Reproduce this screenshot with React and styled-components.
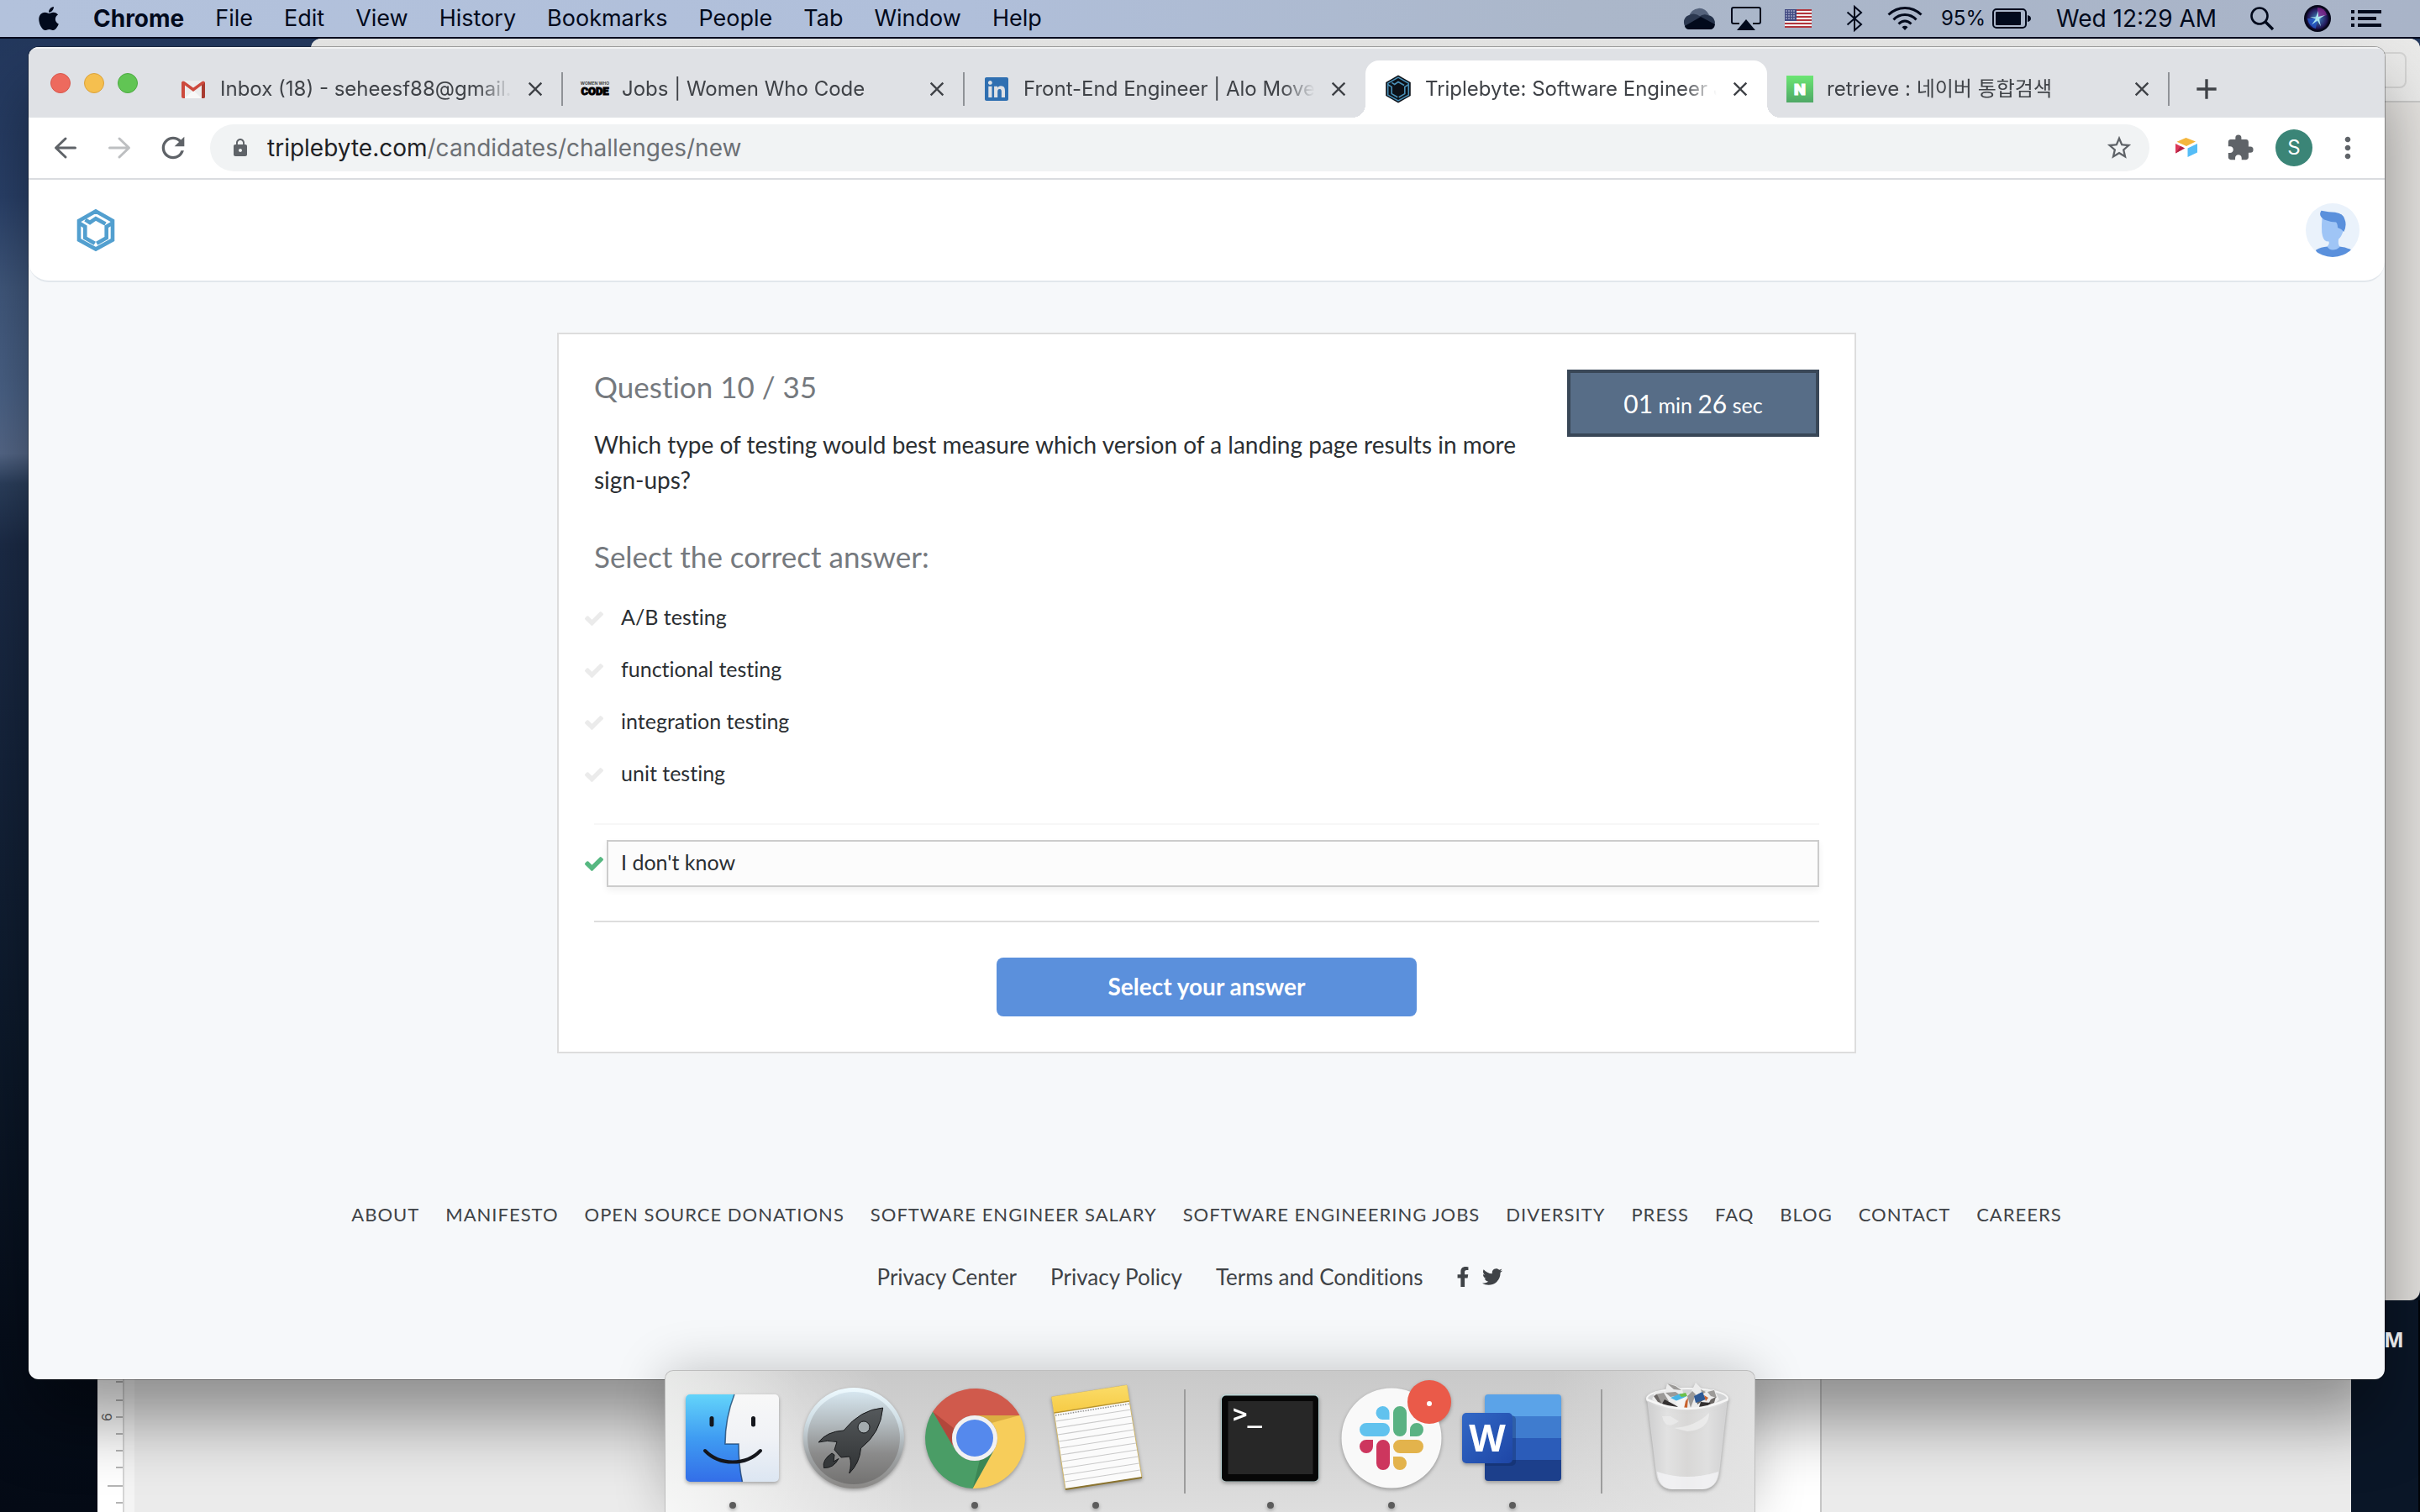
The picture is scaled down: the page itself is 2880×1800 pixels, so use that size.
import React, { useState } from "react";
import styled, { createGlobalStyle, css } from "styled-components";
import { FaApple, FaFacebookF, FaTwitter, FaLinkedin } from "react-icons/fa";
import { MdAdd, MdClose, MdExtension, MdLock, MdMoreVert, MdRefresh, MdStarBorder } from "react-icons/md";

const UI = `Inter, "Noto Sans CJK KR", sans-serif`;
const BODY = `Lato, "Open Sans", sans-serif`;

const GlobalStyle = createGlobalStyle`
  *, *::before, *::after { box-sizing: border-box; }
  html, body { margin: 0; height: 100%; overflow: hidden; }
  #root { height: 100%; }
  button, input { font: inherit; }
  svg { display: block; flex: none; overflow: visible; }
`;

/* ---------- desktop ---------- */

const Desktop = styled.div`
  position: relative;
  height: 100%;
  min-height: 900px;
  overflow: hidden;
  font-family: ${UI};
  background: linear-gradient(
    180deg,
    #22365a 0%, #263c63 8%, #2a416a 13%, #41597e 19%, #4b6388 26%,
    #56698a 30%, #2c405e 32%, #1c2c48 36%, #15243c 50%, #0d1a2c 68%, #060e1b 88%, #040a15 100%
  );
`;

const MenuBar = styled.header`
  position: relative;
  z-index: 5;
  display: flex;
  justify-content: space-between;
  height: 46px;
  padding: 0 46px 0 42px;
  border-bottom: 2px solid #020b1e;
  background: linear-gradient(90deg, #b3c2dc 0%, #b0bfda 40%, #abb7ca 65%, #a9b4c8 100%);
  color: #020a1c;
  font-size: 27px;
  line-height: 44px;
`;

const Menus = styled.nav`
  display: flex;
  align-items: center;
  gap: 37px;
`;

const MenuItem = styled.button`
  padding: 0;
  border: 0;
  background: none;
  color: inherit;
  font-size: ${(p) => (p.$strong ? 28 : 27)}px;
  font-weight: ${(p) => (p.$strong ? 700 : 400)};
`;

const Status = styled.div`
  display: flex;
  align-items: center;
`;

const StatusItem = styled.span`
  display: flex;
  align-items: center;
  gap: 8px;
  margin-left: ${(p) => p.$gap}px;
  font-size: ${(p) => (p.$small ? 24 : 28)}px;
`;

const BackWindow = styled.section`
  position: absolute;
  top: 46px;
  left: 370px;
  right: 0;
  bottom: 252px;
  border-radius: 12px;
  background: #e4e2df;
  overflow: hidden;
`;

const BackToolbar = styled.div`
  display: flex;
  justify-content: flex-end;
  height: 76px;
  padding: 16px 16px 15px 0;
  border-bottom: 2px solid #c9c9c8;
  background: linear-gradient(#e9e9e8, #ececeb);
`;

const BackField = styled.div`
  width: 300px;
  border: 2px solid #d4d4d3;
  border-radius: 8px;
`;

const DesktopLabel = styled.span`
  position: absolute;
  right: 20px;
  bottom: 188px;
  color: #e0e1e3;
  font-size: 24px;
  font-weight: 700;
  line-height: 32px;
`;

const DocWindow = styled.section`
  position: absolute;
  top: 1400px;
  left: 116px;
  right: 82px;
  bottom: 0;
  display: flex;
  background: #ebebeb;
`;

const DocRuler = styled.div`
  display: flex;
  width: 32px;
  border-right: 2px solid #d5d5d5;
  background: #fff;
`;

const DocGutter = styled.div`
  width: 12px;
  background: #f4f4f4;
`;

const DocSheet = styled.div`
  flex: 1;
  margin-left: 760px;
  margin-right: 630px;
  border-right: 2px solid #c6c6c6;
  background: #fff;
`;

const DeskEdge = styled.div`
  position: absolute;
  top: 1548px;
  right: 0;
  bottom: 0;
  width: 82px;
  border-right: 2px solid #010408;
  background: #0a1627;
`;

/* ---------- browser ---------- */

const Browser = styled.main`
  position: absolute;
  top: 56px;
  left: 34px;
  right: 42px;
  bottom: 158px;
  display: flex;
  flex-direction: column;
  border-radius: 12px;
  overflow: hidden;
  background: #f6f8fa;
`;

const BrowserShadow = styled.div`
  position: absolute;
  top: 56px;
  left: 34px;
  right: 42px;
  bottom: 158px;
  border-radius: 12px;
  box-shadow: 0 0 0 1px rgba(0, 0, 0, 0.3), 0 50px 80px rgba(0, 0, 0, 0.4);
`;

const TabStrip = styled.div`
  display: flex;
  align-items: flex-end;
  height: 84px;
  border-top: 2px solid #f1f2f3;
  background: #dfe1e5;
`;

const Lights = styled.div`
  display: flex;
  gap: 16px;
  width: 157px;
  padding: 0 0 29px 26px;
`;

const Light = styled.button`
  width: 24px;
  height: 24px;
  padding: 0;
  border: 1px solid ${(p) => p.$edge};
  border-radius: 50%;
  background: ${(p) => p.$fill};
`;

const Tab = styled.div`
  position: relative;
  display: flex;
  align-items: center;
  width: 478px;
  height: 68px;
  padding: 0 18px 0 23px;
  color: #3f4247;
  font-size: 24px;
  ${(p) =>
    p.$active &&
    css`
      border-radius: 16px 16px 0 0;
      background: #fff;
      &::before,
      &::after {
        content: "";
        position: absolute;
        bottom: 0;
        width: 16px;
        height: 16px;
      }
      &::before {
        left: -16px;
        background: radial-gradient(circle at 0 0, transparent 16px, #fff 16px);
      }
      &::after {
        right: -16px;
        background: radial-gradient(circle at 100% 0, transparent 16px, #fff 16px);
      }
    `}
  ${(p) =>
    p.$divided &&
    css`
      &::after {
        content: "";
        position: absolute;
        right: -1px;
        top: 14px;
        width: 2px;
        height: 40px;
        background: #8f9297;
      }
    `}
`;

const Favicon = styled.span`
  display: flex;
  flex: none;
  align-items: center;
  justify-content: center;
  width: 32px;
  height: 32px;
  margin-right: 16px;
`;

const TabTitle = styled.span`
  flex: 1;
  overflow: hidden;
  white-space: nowrap;
  line-height: 36px;
  mask-image: linear-gradient(90deg, #000 0, #000 calc(100% - 40px), transparent 100%);
`;

const IconButton = styled.button`
  display: flex;
  align-items: center;
  justify-content: center;
  flex: none;
  width: ${(p) => p.$size}px;
  height: ${(p) => p.$size}px;
  padding: 0;
  border: 0;
  background: none;
  color: ${(p) => p.$color || "#5f6368"};
`;

const CloseButton = styled(IconButton)`
  margin-left: 14px;
`;

const NewTab = styled(IconButton)`
  margin: 0 0 2px 13px;
`;

const Toolbar = styled.div`
  display: flex;
  align-items: center;
  height: 74px;
  padding: 0 12px;
  border-bottom: 2px solid #dadce0;
  background: #fff;
`;

const AddressBar = styled.div`
  display: flex;
  flex: 1;
  align-items: center;
  height: 56px;
  margin: 0 12px;
  padding: 0 19px 0 24px;
  border-radius: 28px;
  background: #f1f3f4;
  color: #5f6368;
`;

const Address = styled.span`
  flex: 1;
  padding-left: 20px;
  font-size: 28px;
  line-height: 40px;
  color: #6c7075;
  b {
    color: #202124;
    font-weight: 400;
  }
`;

const Profile = styled.span`
  width: 44px;
  height: 44px;
  border-radius: 50%;
  background: #3b8577;
  color: #fff;
  font-size: 24px;
  line-height: 44px;
  text-align: center;
`;

/* ---------- page ---------- */

const SiteHeader = styled.header`
  display: flex;
  align-items: center;
  justify-content: space-between;
  height: 122px;
  padding: 0 30px 0 58px;
  border-bottom: 2px solid #e2e7ec;
  border-radius: 0 0 24px 24px;
  background: #fff;
`;

const Page = styled.div`
  flex: 1;
  font-family: ${BODY};
  font-variant-ligatures: none;
  color: #2b2f33;
`;

const Card = styled.form`
  max-width: 1546px;
  margin: 60px auto 0;
  padding: 42px;
  border: 2px solid #dddddd;
  background: #fff;
`;

const QuestionRow = styled.div`
  display: flex;
  align-items: flex-start;
  gap: 20px;
`;

const QuestionText = styled.div`
  flex: 1;
`;

const Heading = styled.h2`
  margin: 0;
  color: #75797e;
  font-size: 35px;
  font-weight: 400;
  line-height: 40px;
`;

const Prompt = styled.p`
  margin: 28px 0 50px;
  font-size: 28px;
  line-height: 42px;
`;

const Timer = styled.div`
  width: 300px;
  height: 80px;
  border: 4px solid #394757;
  background: #576d87;
  color: #fff;
  font-size: 25px;
  line-height: 72px;
  text-align: center;
  b {
    font-size: 30px;
    font-weight: 400;
  }
`;

const Options = styled.fieldset`
  display: flex;
  flex-direction: column;
  gap: 6px;
  margin: 26px 0 0;
  padding: 0;
  border: 0;
`;

const OptionRow = styled.label`
  display: flex;
  align-items: center;
  margin-left: -11px;
  color: ${(p) => (p.$checked ? "#56b881" : "#ebebeb")};
`;

const Radio = styled.input`
  position: absolute;
  opacity: 0;
`;

const OptionBox = styled.span`
  flex: 1;
  height: 56px;
  margin-left: 4px;
  padding-left: 15px;
  border: 2px solid transparent;
  color: #2b2f33;
  font-size: 25px;
  line-height: 49px;
  ${(p) =>
    p.$checked &&
    css`
      border-color: #cccccc;
      background: #fcfcfc;
      box-shadow: 0 4px 8px rgba(0, 0, 0, 0.06);
    `}
`;

const FaintRule = styled.hr`
  width: 100%;
  margin: 24px 0 12px;
  border: 0;
  border-top: 2px solid #f7f7f7;
`;

const Rule = styled.hr`
  margin: 40px 0 42px;
  border: 0;
  border-top: 2px solid #dddddd;
`;

const Submit = styled.button`
  display: block;
  width: 500px;
  height: 70px;
  margin: 0 auto;
  padding: 0 0 2px;
  border: 0;
  border-radius: 8px;
  background: #5b90dc;
  color: #fff;
  font-size: 28px;
  font-weight: 700;
`;

const Footer = styled.footer`
  display: flex;
  flex-direction: column;
  align-items: center;
  gap: 42px;
  margin-top: 176px;
  line-height: 32px;
`;

const FooterNav = styled.nav`
  display: flex;
  justify-content: center;
  gap: 31px;
  font-size: 22px;
  letter-spacing: 1px;
  text-transform: uppercase;
  white-space: nowrap;
`;

const LegalNav = styled.nav`
  display: flex;
  align-items: center;
  gap: 40px;
  padding-right: 40px;
  font-size: 26px;
`;

const Social = styled.span`
  display: flex;
  gap: 11px;
  margin-left: -4px;
`;

const FooterLink = styled.a`
  color: #3f4347;
  text-decoration: none;
`;

/* ---------- dock ---------- */

const Dock = styled.div`
  position: absolute;
  left: 50%;
  bottom: 0;
  display: flex;
  height: 169px;
  padding: 20px 8px 0;
  transform: translateX(-50%);
  border: 1px solid #bdbdbd;
  border-bottom: 0;
  border-radius: 10px 10px 0 0;
  background:
    radial-gradient(circle at 0% 100%, rgba(255, 255, 255, 0.7), transparent 300px),
    linear-gradient(90deg, rgba(225, 227, 225, 0.8), transparent 160px calc(100% - 240px), rgba(230, 230, 230, 0.8)),
    linear-gradient(#c9c9c9, #dedede);
  box-shadow: 0 0 60px rgba(0, 0, 0, 0.22);
`;

const DockItem = styled.button`
  display: flex;
  flex-direction: column;
  align-items: center;
  width: 144px;
  padding: 0;
  border: 0;
  background: none;
  filter: drop-shadow(0 2px 2px rgba(0, 0, 0, 0.3));
`;

const Running = styled.span`
  width: 8px;
  height: 8px;
  margin-top: 16px;
  border-radius: 50%;
  background: #5c5c5c;
`;

const DockDivider = styled.span`
  width: 2px;
  height: 124px;
  margin: 2px 29px 0 33px;
  background: #9d9d9d;
`;

/* ---------- small drawings ---------- */

const CheckMark = () => (
  <svg width="22" height="18" viewBox="121 270 1550 1252" fill="currentColor">
    <path d="M1671 566q0 40-28 68l-724 724-136 136q-28 28-68 28t-68-28l-136-136-362-362q-28-28-28-68t28-68l136-136q28-28 68-28t68 28l294 295 656-657q28-28 68-28t68 28l136 136q28 28 28 68z" />
  </svg>
);

const HexStrokes = ({ color, width }) => (
  <g fill="none" stroke={color} strokeWidth={width}>
    <path d="M22 2.4 42 13.8V36.6L22 47.6 2 36.6V13.8Z" />
    <path d="M2 16.5 9.3 20.8V34.2L20.8 40.8" />
    <path d="M42 16.5 34.7 20.8V34.2L23.2 40.8" />
    <path d="M9.5 12.6 15 16 22 11.2 33.5 17.6" />
  </g>
);

const SiteLogo = () => (
  <svg width="44" height="50" viewBox="0 0 44 50">
    <HexStrokes color="#529fcf" width={4.6} />
  </svg>
);

const TriplebyteFavicon = () => (
  <svg width="30" height="32" viewBox="-1 -1 46 52">
    <path d="M22 -2 46 12V38L22 52 -2 38V12Z" fill="#0c1118" />
    <HexStrokes color="#4a90b8" width={2.6} />
  </svg>
);

const GmailFavicon = () => (
  <svg width="28" height="21" viewBox="0 0 28 21">
    <path d="M2 0h24a2 2 0 0 1 2 2v17a2 2 0 0 1-2 2H2a2 2 0 0 1-2-2V2a2 2 0 0 1 2-2z" fill="#eceded" />
    <path d="M4 21 14 11.5 24 21z" fill="#f8f8f8" />
    <path d="M0 2v17a2 2 0 0 0 2 2h2V5.5L14 13 24 5.5V21h2a2 2 0 0 0 2-2V2q-1.2-2.6-3.6-1L14 8.6 3.6 1Q1.2-.6 0 2z" fill="#cd4a3d" />
    <path d="M24 5.500V21h2a2 2 0 0 0 2-2V2.500z" fill="#a83b31" />
  </svg>
);

const CodeFavicon = () => (
  <svg width="32" height="18" viewBox="0 0 32 18">
    <text x="16" y="4" textAnchor="middle" fontSize="5" fontWeight="700" fontFamily="Inter" fill="#444">WOMEN WHO</text>
    <text x="16" y="16" textAnchor="middle" fontSize="13" fontWeight="900" fontFamily="Roboto" fill="#000" stroke="#000" strokeWidth="1">CODE</text>
  </svg>
);

const NaverFavicon = () => (
  <svg width="32" height="32" viewBox="0 0 32 32">
    <defs>
      <linearGradient id="nv" x2="0" y2="1">
        <stop offset="0" stopColor="#6be673" />
        <stop offset="1" stopColor="#4fa866" />
      </linearGradient>
    </defs>
    <rect width="32" height="32" fill="url(#nv)" />
    <text x="16" y="22.500" textAnchor="middle" fontFamily="Inter" fontSize="18" fontWeight="900" fill="#fff" stroke="#fff">N</text>
  </svg>
);

const ArrowIcon = ({ flip, color }) => (
  <svg width="26" height="26" viewBox="0 0 26 26" fill="none" stroke={color} strokeWidth="3" strokeLinecap="round" strokeLinejoin="round">
    <path d={flip ? "M1.500 13H24M13 2l11.500 11L13 24" : "M24.500 13H2M13 2 1.500 13 13 24"} />
  </svg>
);

const ExtensionCube = () => (
  <svg width="28" height="24" viewBox="0 0 28 24">
    <path d="M13.500 0 25 4.600 14 10 2.500 4.800z" fill="#f4b63d" />
    <path d="M1 7 12 12.500 1 18.500z" fill="#dc3858" />
    <path d="M1 18.500 12 12.500 7 10z" fill="#b32246" />
    <path d="M15.500 12.500 27 7v10.500L15.500 23z" fill="#55bdf7" />
  </svg>
);

const UserAvatar = () => (
  <svg width="64" height="64" viewBox="0 0 64 64">
    <defs>
      <clipPath id="av"><circle cx="32" cy="32" r="32" /></clipPath>
    </defs>
    <g clipPath="url(#av)">
      <rect width="64" height="64" fill="#eaf2fb" />
      <path d="M12 55.700Q18 52 26 51.500H40Q49 52 54.500 56L50 66H15z" fill="#5a90dc" />
      <path d="M19.600 16Q18.600 26 19.200 34.700 20.500 44 24.500 45.200L27.500 45.600Q28.500 49 25.500 51.500 28 55.500 32 55.500 37 55.500 40.500 52 38 48 39.200 42.500 42.500 40 45 32L40 16z" fill="#9fc5f6" />
      <path d="M18.500 8.700Q28 10.600 35 10.700 44 12 46 18 49.500 26 45.300 34 43 30.500 38 29 38 24 36 22.500 28 22 22 19.500 14.500 15 18.500 8.700z" fill="#5a90dc" />
    </g>
  </svg>
);

const INK = "#020a1c";

const CloudIcon = () => (
  <svg width="40" height="28" viewBox="0 0 40 28">
    <path d="M8 12a12.500 12.500 0 0 1 24-2l-14 8z" fill="#55637c" />
    <path d="M8 10a9 9 0 0 0 0 17L22 12Q15 6 8 10z" fill="#2b3850" />
    <path d="M30 10a9 9 0 0 1 4 17L20 12Q25 8 30 10z" fill="#26334b" />
    <path d="M3 23 22 12l17 9q-1 6-6 6H8q-4 0-5-4z" fill={INK} />
  </svg>
);

const AirplayIcon = () => (
  <svg width="36" height="28" viewBox="0 0 36 28">
    <path d="M10 20H3a2 2 0 0 1-2-2V3a2 2 0 0 1 2-2h30a2 2 0 0 1 2 2v15a2 2 0 0 1-2 2h-7" fill="none" stroke={INK} strokeWidth="2" />
    <path d="M18 15 29 28H7z" fill={INK} />
  </svg>
);

const FlagIcon = () => (
  <svg width="32" height="22" viewBox="0 0 32 22">
    <rect width="32" height="22" fill="#f3f0f0" />
    {[0, 1, 2, 3, 4, 5].map((i) => (
      <rect key={i} y={i * 4} width="32" height="2" fill="#b2353c" />
    ))}
    <rect width="14" height="14" fill="#414a82" />
    {[2, 5, 8, 11].map((y) => [2, 5, 8, 11].map((x) => <circle key={`${x}-${y}`} cx={x} cy={y} r=".8" fill="#dfe2f0" />))}
  </svg>
);

const BluetoothIcon = () => (
  <svg width="20" height="30" viewBox="0 0 20 30" fill="none" stroke={INK} strokeWidth="2">
    <path d="M1.500 7.500 18 22l-8 7V1l8 7L1.500 22.500" />
  </svg>
);

const WifiIcon = () => (
  <svg width="42" height="28" viewBox="0 0 42 28" fill="none" stroke={INK} strokeWidth="3">
    <path d="M1.500 9.500Q10 1.500 21 1.500T40.500 9.500M7.500 15.500Q13 9.500 21 9.500T34.500 15.500M13.500 20.500Q17 17 21 17T28.500 20.500" />
    <path d="M17.500 24.200Q21 21.500 24.500 24.200L21 28z" fill={INK} stroke="none" />
  </svg>
);

const BatteryIcon = () => (
  <svg width="46" height="24" viewBox="0 0 46 24">
    <rect x="1" y="1" width="39" height="22" rx="4" fill="none" stroke={INK} strokeWidth="2" />
    <rect x="4" y="4" width="30" height="16" rx="1" fill={INK} />
    <path d="M42 8q4 1 4 4t-4 4z" fill={INK} />
  </svg>
);

const SearchIcon = () => (
  <svg width="28" height="28" viewBox="0 0 28 28" fill="none" stroke={INK} strokeWidth="2.600">
    <circle cx="11" cy="11" r="9.500" />
    <path d="m18 18 9 9" strokeWidth="3.400" />
  </svg>
);

const SiriIcon = () => (
  <svg width="32" height="32" viewBox="0 0 32 32">
    <defs>
      <radialGradient id="siri">
        <stop offset="0" stopColor="#9fdcf0" />
        <stop offset=".3" stopColor="#35609c" />
        <stop offset=".8" stopColor="#241a5c" />
        <stop offset="1" stopColor="#0a0820" />
      </radialGradient>
    </defs>
    <circle cx="16" cy="16" r="16" fill="#06071a" />
    <circle cx="16" cy="16" r="14" fill="url(#siri)" />
    <path d="M16 3q9 0 11 9L16 16z" fill="#a02a9a" opacity=".6" />
    <path d="M4 16q2 10 10 12l2-12z" fill="#2463d8" opacity=".7" />
    <path d="m17 7 0 7L25 12l-7 4.500 2 9-4-7-7 5 5-7L7 14l7 .500z" fill="#a9e4ee" />
  </svg>
);

const ListIcon = () => (
  <svg width="36" height="20" viewBox="0 0 36 20" fill={INK}>
    {[0, 8, 16].map((y) => (
      <g key={y}>
        <rect y={y} width="4" height="4" />
        <rect x="8" y={y} width={y === 8 ? 22 : 28} height="4" />
      </g>
    ))}
  </svg>
);

const RulerMarks = () => (
  <svg width="30" height="400" viewBox="0 0 30 400">
    {[245, 267, 287, 307, 327, 347, 389].map((y) => (
      <rect key={y} x="22" y={y - 1} width="8" height="2" fill="#b5b5b5" />
    ))}
    <rect x="12" y="368" width="18" height="2" fill="#b5b5b5" />
    <text transform="translate(17 292) rotate(-90)" fontFamily="Inter" fontSize="16" fill="#666">6</text>
  </svg>
);

/* ---------- dock icons, each on a 120 grid ---------- */

const Icon120 = ({ children }) => (
  <svg width="120" height="120" viewBox="0 0 120 120">{children}</svg>
);

const Gradient = ({ id, stops, x2 = 0, y2 = 1 }) => (
  <linearGradient id={id} x1="0" y1="0" x2={x2} y2={y2}>
    {stops.map((c, i) => (
      <stop key={c + i} offset={i / (stops.length - 1)} stopColor={c} />
    ))}
  </linearGradient>
);

const FinderIcon = () => (
  <Icon120>
    <defs>
      <Gradient id="fb" stops={["#63d4fa", "#3f9cf2", "#336ee8"]} />
      <Gradient id="fw" stops={["#f8f8f8", "#f0f2f6", "#dce6f2"]} />
    </defs>
    <rect x="4" y="8" width="111" height="104" rx="5" fill="url(#fw)" />
    <path d="M9 8H62Q51 36 51 67H67Q67 92 71.500 112H9a5 5 0 0 1-5-5V13a5 5 0 0 1 5-5z" fill="url(#fb)" />
    <path d="M62 8Q51 36 51 67H67Q67 92 71.500 112" fill="none" stroke="#10355e" strokeOpacity=".7" strokeWidth="1.500" />
    <path d="M35 36.500V44M84.500 36.500V44" stroke="#14161c" strokeWidth="5" strokeLinecap="round" />
    <path d="M27 75Q40 88.500 60 88.500T93 75" fill="none" stroke="#14161c" strokeWidth="4" strokeLinecap="round" />
  </Icon120>
);

const LaunchpadIcon = () => (
  <Icon120>
    <defs>
      <Gradient id="lr" stops={["#eefaff", "#cfdde4", "#a0a4a6", "#8a8886"]} />
      <Gradient id="lf" stops={["#d6e6ef", "#b4bcc0", "#8b8b8b", "#737271"]} />
      <Gradient id="lk" stops={["#55595c", "#303234"]} />
    </defs>
    <circle cx="60" cy="60" r="60" fill="url(#lr)" />
    <circle cx="60" cy="60" r="55" fill="url(#lf)" />
    <path d="M94.700 24Q68 26 48 51 28 52 18 65 28 62 40 64.500L37 74 45 83 55 82Q58 90 54.700 102 67 90 68.600 72 92 54 94.700 24z" fill="url(#lk)" stroke="#17191b" />
    <circle cx="72" cy="47" r="7" fill="#a3abae" stroke="#17191b" />
    <path d="M34 78Q22 86 24.500 95.500 36 96 42 84.500L36 88 37 80z" fill="#35383a" stroke="#17191b" />
  </Icon120>
);

const ChromeIcon = () => (
  <Icon120>
    <path d="M10 28.600A60 60 0 0 1 113.500 33H60A27 27 0 0 0 36.600 73.500Z" fill="#d05a4c" />
    <path d="M10 28.600 36.600 73.500A27 27 0 0 0 83.400 73.500L57.600 120A60 60 0 0 1 10 28.600Z" fill="#4a9d66" />
    <path d="M113.500 33A60 60 0 0 1 57.600 120L83.400 73.500A27 27 0 0 0 60 33Z" fill="#f7cd5a" />
    <path d="M10 28.600 33 68Q32 54 36 49Z" fill="#8d3028" opacity=".45" />
    <path d="M60 33H113L80 42Z" fill="#b98a25" opacity=".45" />
    <path d="M57.600 120 82 76 66 86Z" fill="#2a6b3f" opacity=".45" />
    <circle cx="60" cy="60" r="27" fill="#f1f1f2" />
    <circle cx="60" cy="60" r="22" fill="#5589ed" />
  </Icon120>
);

const NotesIcon = () => (
  <Icon120>
    <defs>
      <Gradient id="nt" stops={["#fbdc68", "#f6cb45"]} />
    </defs>
    <path d="M7.500 11 97 -3 115 107 24 121z" fill="#fbfbfb" stroke="#cfb66a" />
    <path d="M7.500 11 97 -3 100 15.500 10.500 29.500z" fill="url(#nt)" />
    <path d="M10.500 30 100 16" stroke="#b99328" strokeWidth="1.500" />
    <path d="M12 33 101 19" stroke="#8d8d8d" strokeWidth="1.500" strokeDasharray="1.500 1.500" />
    {[0, 1, 2, 3, 4, 5, 6, 7, 8, 9].map((i) => (
      <path key={i} d={`M${12.5 + i * 1.2} ${40 + i * 8}l89.500-14`} stroke="#c9c9c9" strokeWidth="1.200" />
    ))}
    <path d="M24 121 115 107" stroke="#8a7330" strokeWidth="2" />
  </Icon120>
);

const TerminalIcon = () => (
  <Icon120>
    <rect x="1" y="8" width="117" height="104" rx="6" fill="#b9d4d4" />
    <rect x="2" y="9.500" width="115" height="102" rx="5" fill="#070707" />
    <rect x="9.500" y="16" width="101" height="87" fill="#272727" />
    <text x="15" y="41" fontFamily="DejaVu Sans Mono, monospace" fontWeight="700" fontSize="29" fill="#fff">&gt;_</text>
  </Icon120>
);

const SlackIcon = () => (
  <Icon120>
    <circle cx="60" cy="60" r="59.500" fill="#f9f9f9" />
    <path d="M57.500 38H50a8 8 0 1 1 7.500-8zM30 42h20a8 8 0 0 1 0 16H30a8 8 0 0 1 0-16z" fill="#61c2ee" />
    <path d="M62 30a8 8 0 0 1 16 0V50a8 8 0 0 1-16 0zM82 58V50a8 8 0 1 1 8 8z" fill="#5ab283" />
    <path d="M38 62V70a8 8 0 1 1-8-8zM42 70a8 8 0 0 1 16 0V90a8 8 0 0 1-16 0z" fill="#cd365e" />
    <path d="M70 62H90a8 8 0 0 1 0 16H70a8 8 0 0 1 0-16zM62 82H70a8 8 0 1 1-8 8z" fill="#e3b34c" />
    <circle cx="105" cy="17" r="26" fill="#ea5a49" />
    <circle cx="105" cy="19" r="3" fill="#fff" />
  </Icon120>
);

const WordIcon = () => (
  <Icon120>
    <defs>
      <clipPath id="wc"><rect x="27" y="8" width="91" height="103" rx="4" /></clipPath>
      <Gradient id="wf" x2={1} stops={["#3268c6", "#1e46a6"]} />
    </defs>
    <g clipPath="url(#wc)">
      <rect x="27" y="8" width="91" height="27" fill="#5ba3e8" />
      <rect x="27" y="34" width="91" height="27" fill="#3f7ccf" />
      <rect x="27" y="60" width="91" height="27" fill="#2b5cb9" />
      <rect x="27" y="86" width="91" height="27" fill="#1c3f8b" />
      <rect x="24" y="33" width="40" height="60" rx="5" fill="#0b1f4d" opacity=".3" />
    </g>
    <rect y="30" width="60" height="60" rx="5" fill="url(#wf)" />
    <text x="30" y="76" textAnchor="middle" fontFamily="Open Sans" fontWeight="700" fontSize="45" fill="#fff">W</text>
  </Icon120>
);

const TrashIcon = () => (
  <Icon120>
    <defs>
      <Gradient id="tb" x2={1} y2={0} stops={["#cfcfd0", "#e4e4e4", "#dad9d8", "#e2e2e2", "#d2d2d3"]} />
    </defs>
    <ellipse cx="60" cy="13" rx="48" ry="12" fill="#d2d3d4" stroke="#f4f4f4" strokeWidth="2" />
    <path d="M18 14 22 4 34 4 36 -5 46 -3 54 2 56 10 64 6 70 -6 80 4 92 2 98 14 90 22 74 25H44L26 20z" fill="#ececec" />
    <path d="M22 8 32 6 38 16 28 20zM36 -5 44 2 53 3 46 -2zM34 6 46 5 52 9 40 11zM60 10 66 4 70 8 64 24zM84 5 92 3 95 12 88 10zM76 2 82 5 78 8z" fill="#9c9a98" />
    <path d="M20 10 24 8 29 18 25 17zM70 10 76 6 80 14 72 20zM88 14 94 11 92 18 84 21z" fill="#6a6664" />
    <path d="M33 14 46 21 52 25 36 24 30 19zM76 17 88 18 82 24 74 23z" fill="#343131" />
    <path d="M40 12 52 7 59 10 50 17z" fill="#48b5e6" />
    <path d="M50 8 58 6 60 10 53 11z" fill="#6cc04a" />
    <path d="M46 16 58 11 56 25 50 25z" fill="#f5f5f5" />
    <path d="M68 10 78 5 82 14 70 18z" fill="#2e5a96" />
    <path d="M58 16 61 12 60 24 56 25zM80 9 85 12 82 16z" fill="#c8622e" />
    <path d="M12 14Q60 36 108 14L98 102Q95 120 78 121H42Q25 120 23 102z" fill="url(#tb)" opacity=".95" />
    <path d="M12 14Q60 36 108 14" fill="none" stroke="#f6f6f6" strokeWidth="2.500" />
    <path d="M44 48Q70 46 86 30 86 50 60 52z" fill="#f2f2f2" opacity=".6" />
    <path d="M30 34Q34 52 50 40L40 34z" fill="#efefef" opacity=".6" />
    <path d="M24 100Q60 112 97 100 96 119 78 121H42Q26 120 24 100z" fill="#f7f7fa" opacity=".7" />
  </Icon120>
);

/* ---------- data ---------- */

const MENUS = ["File", "Edit", "View", "History", "Bookmarks", "People", "Tab", "Window", "Help"];

const TABS = [
  { title: "Inbox (18) - seheesf88@gmail.", icon: <GmailFavicon />, divided: true },
  { title: "Jobs | Women Who Code", icon: <CodeFavicon />, divided: true },
  { title: "Front-End Engineer | Alo Moves", icon: <FaLinkedin size={32} color="#2f6fb1" /> },
  { title: "Triplebyte: Software Engineer J", icon: <TriplebyteFavicon />, active: true },
  { title: "retrieve : 네이버 통합검색", icon: <NaverFavicon />, divided: true },
];

const ANSWERS = ["A/B testing", "functional testing", "integration testing", "unit testing"];
const UNKNOWN = "I don't know";

const LINKS = [
  "About", "Manifesto", "Open Source Donations", "Software Engineer Salary", "Software Engineering Jobs",
  "Diversity", "Press", "FAQ", "Blog", "Contact", "Careers",
];

const LEGAL = ["Privacy Center", "Privacy Policy", "Terms and Conditions"];

const DOCK = [
  { name: "Finder", art: <FinderIcon />, running: true },
  { name: "Launchpad", art: <LaunchpadIcon /> },
  { name: "Google Chrome", art: <ChromeIcon />, running: true },
  { name: "Notes", art: <NotesIcon />, running: true },
  null,
  { name: "Terminal", art: <TerminalIcon />, running: true },
  { name: "Slack", art: <SlackIcon />, running: true },
  { name: "Word", art: <WordIcon />, running: true },
  null,
  { name: "Trash", art: <TrashIcon /> },
];

function Option({ text, value, onChange }) {
  const checked = value === text;
  return (
    <OptionRow $checked={checked}>
      <Radio type="radio" name="answer" checked={checked} onChange={() => onChange(text)} />
      <CheckMark />
      <OptionBox $checked={checked}>{text}</OptionBox>
    </OptionRow>
  );
}

function Quiz() {
  const [answer, setAnswer] = useState(UNKNOWN);
  return (
    <Card onSubmit={(e) => e.preventDefault()}>
      <QuestionRow>
        <QuestionText>
          <Heading>Question 10 / 35</Heading>
          <Prompt>Which type of testing would best measure which version of a landing page results in more sign-ups?</Prompt>
        </QuestionText>
        <Timer>
          <b>01</b> min <b>26</b> sec
        </Timer>
      </QuestionRow>
      <Heading id="pick">Select the correct answer:</Heading>
      <Options aria-labelledby="pick">
        {ANSWERS.map((a) => (
          <Option key={a} text={a} value={answer} onChange={setAnswer} />
        ))}
        <FaintRule />
        <Option text={UNKNOWN} value={answer} onChange={setAnswer} />
      </Options>
      <Rule />
      <Submit type="submit">Select your answer</Submit>
    </Card>
  );
}

export default function App() {
  return (
    <Desktop>
      <GlobalStyle />
      <MenuBar>
        <Menus>
          <FaApple size={32} />
          <MenuItem $strong>Chrome</MenuItem>
          {MENUS.map((m) => (
            <MenuItem key={m}>{m}</MenuItem>
          ))}
        </Menus>
        <Status>
          <StatusItem $gap={0}><CloudIcon /></StatusItem>
          <StatusItem $gap={18}><AirplayIcon /></StatusItem>
          <StatusItem $gap={28}><FlagIcon /></StatusItem>
          <StatusItem $gap={41}><BluetoothIcon /></StatusItem>
          <StatusItem $gap={29}><WifiIcon /></StatusItem>
          <StatusItem $gap={22} $small>95%<BatteryIcon /></StatusItem>
          <StatusItem $gap={30}>Wed 12:29 AM</StatusItem>
          <StatusItem $gap={40}><SearchIcon /></StatusItem>
          <StatusItem $gap={36}><SiriIcon /></StatusItem>
          <StatusItem $gap={24}><ListIcon /></StatusItem>
        </Status>
      </MenuBar>

      <DeskEdge />
      <DocWindow>
        <DocRuler><RulerMarks /></DocRuler>
        <DocGutter />
        <DocSheet />
      </DocWindow>
      <BackWindow>
        <BackToolbar><BackField /></BackToolbar>
      </BackWindow>
      <BrowserShadow />
      <DesktopLabel>M</DesktopLabel>

      <Browser>
        <TabStrip>
          <Lights>
            <Light aria-label="Close window" $fill="#ed6a5e" $edge="#d8564b" />
            <Light aria-label="Minimise" $fill="#f5bf4f" $edge="#dba23a" />
            <Light aria-label="Zoom" $fill="#61c554" $edge="#4caa41" />
          </Lights>
          {TABS.map((t) => (
            <Tab key={t.title} $active={t.active} $divided={t.divided}>
              <Favicon>{t.icon}</Favicon>
              <TabTitle>{t.title}</TabTitle>
              <CloseButton $size={28} $color="#3f4247" aria-label="Close tab"><MdClose size={28} /></CloseButton>
            </Tab>
          ))}
          <NewTab $size={64} $color="#3f4247" aria-label="New tab"><MdAdd size={40} /></NewTab>
        </TabStrip>
        <Toolbar>
          <IconButton $size={64} aria-label="Back"><ArrowIcon color="#5f6368" /></IconButton>
          <IconButton $size={64} aria-label="Forward"><ArrowIcon flip color="#bdbfc1" /></IconButton>
          <IconButton $size={64} aria-label="Reload"><MdRefresh size={40} /></IconButton>
          <AddressBar>
            <MdLock size={24} />
            <Address><b>triplebyte.com</b>/candidates/challenges/new</Address>
            <MdStarBorder size={34} />
          </AddressBar>
          <IconButton $size={64} aria-label="Extension"><ExtensionCube /></IconButton>
          <IconButton $size={64} aria-label="Extensions"><MdExtension size={34} /></IconButton>
          <IconButton $size={64} aria-label="Profile"><Profile>S</Profile></IconButton>
          <IconButton $size={64} aria-label="More"><MdMoreVert size={40} /></IconButton>
        </Toolbar>
        <SiteHeader>
          <SiteLogo />
          <UserAvatar />
        </SiteHeader>
        <Page>
          <Quiz />
          <Footer>
            <FooterNav>
              {LINKS.map((l) => (
                <FooterLink key={l} href="#">{l}</FooterLink>
              ))}
            </FooterNav>
            <LegalNav>
              {LEGAL.map((l) => (
                <FooterLink key={l} href="#">{l}</FooterLink>
              ))}
              <Social>
                <FooterLink href="#" aria-label="Facebook"><FaFacebookF size={24} /></FooterLink>
                <FooterLink href="#" aria-label="Twitter"><FaTwitter size={24} /></FooterLink>
              </Social>
            </LegalNav>
          </Footer>
        </Page>
      </Browser>

      <Dock>
        {DOCK.map((d, i) =>
          d ? (
            <DockItem key={d.name} aria-label={d.name}>
              {d.art}
              {d.running && <Running />}
            </DockItem>
          ) : (
            <DockDivider key={i} />
          )
        )}
      </Dock>
    </Desktop>
  );
}
